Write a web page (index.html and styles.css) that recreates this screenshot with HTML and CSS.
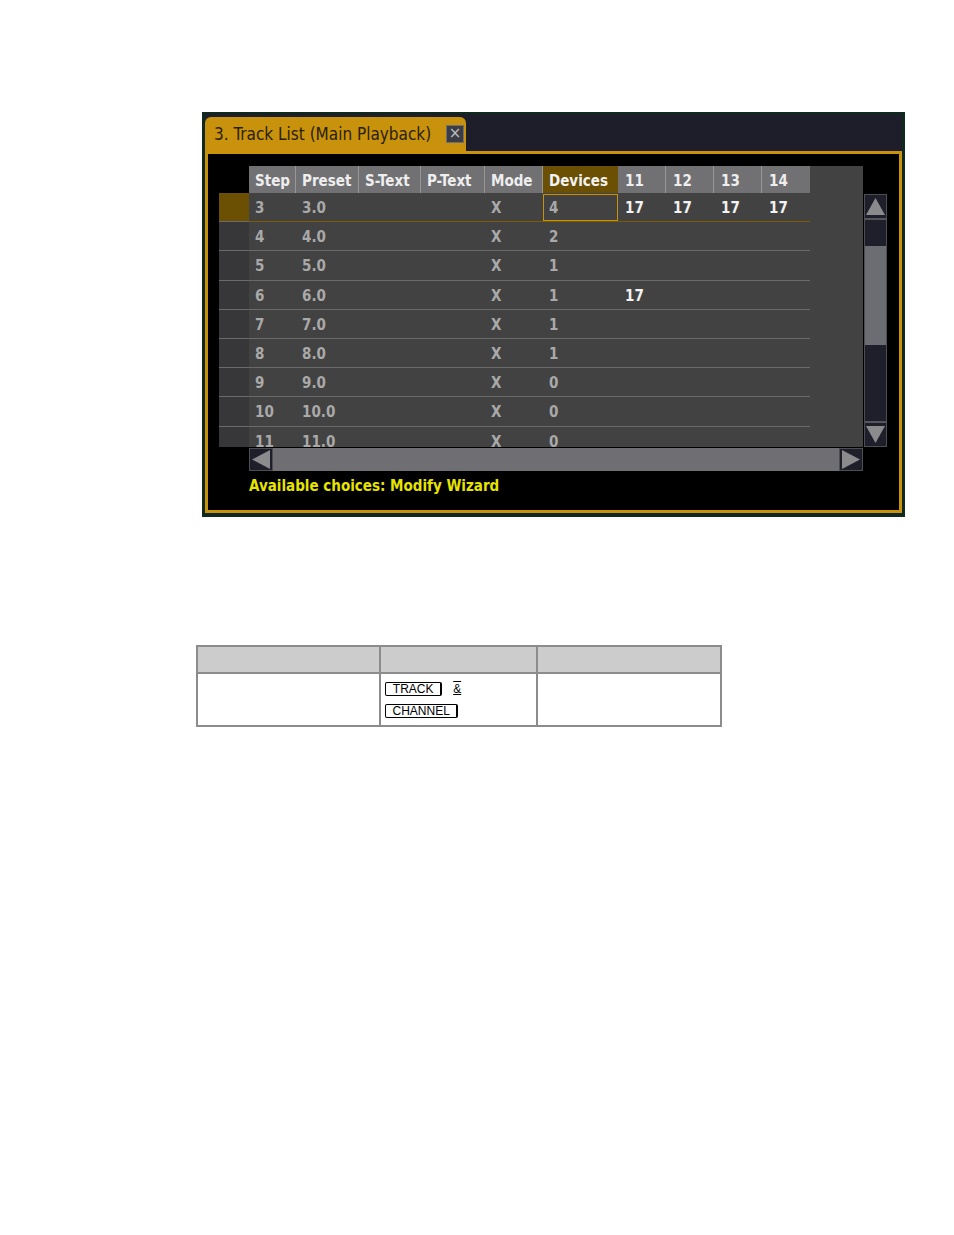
FILE: index.html
```html
<!DOCTYPE html>
<html>
<head>
<meta charset="utf-8">
<link rel="stylesheet" href="styles.css">
</head>
<body>
<div class="page">
  <div class="shot">
    <div class="tabbar">
      <div class="tab">
        <span class="tab-title">3. Track List (Main Playback)</span>
        <span class="close">×</span>
      </div>
    </div>
    <div class="frame">
      <div class="gridrow">
        <div class="grid">
          <div class="hrow">
            <div class="lh"></div>
            <div class="hc c-step">Step</div>
            <div class="hc c-preset">Preset</div>
            <div class="hc c-stext">S-Text</div>
            <div class="hc c-ptext">P-Text</div>
            <div class="hc c-mode">Mode</div>
            <div class="hc c-dev hsel">Devices</div>
            <div class="hc c-n">11</div>
            <div class="hc c-n">12</div>
            <div class="hc c-n">13</div>
            <div class="hc c-n last">14</div>
            <div class="hfill"></div>
          </div>
          <div class="row sel">
            <div class="lc"></div>
            <div class="cells">
              <div class="c c-step">3</div>
              <div class="c c-preset">3.0</div>
              <div class="c c-stext"></div>
              <div class="c c-ptext"></div>
              <div class="c c-mode">X</div>
              <div class="c c-dev csel">4</div>
              <div class="c c-n w">17</div>
              <div class="c c-n w">17</div>
              <div class="c c-n w">17</div>
              <div class="c c-n w">17</div>
            </div>
          </div>
          <div class="row">
            <div class="lc"></div>
            <div class="cells">
              <div class="c c-step">4</div><div class="c c-preset">4.0</div><div class="c c-stext"></div><div class="c c-ptext"></div><div class="c c-mode">X</div><div class="c c-dev">2</div><div class="c c-n"></div><div class="c c-n"></div><div class="c c-n"></div><div class="c c-n"></div>
            </div>
          </div>
          <div class="row">
            <div class="lc"></div>
            <div class="cells">
              <div class="c c-step">5</div><div class="c c-preset">5.0</div><div class="c c-stext"></div><div class="c c-ptext"></div><div class="c c-mode">X</div><div class="c c-dev">1</div><div class="c c-n"></div><div class="c c-n"></div><div class="c c-n"></div><div class="c c-n"></div>
            </div>
          </div>
          <div class="row">
            <div class="lc"></div>
            <div class="cells">
              <div class="c c-step">6</div><div class="c c-preset">6.0</div><div class="c c-stext"></div><div class="c c-ptext"></div><div class="c c-mode">X</div><div class="c c-dev">1</div><div class="c c-n w">17</div><div class="c c-n"></div><div class="c c-n"></div><div class="c c-n"></div>
            </div>
          </div>
          <div class="row">
            <div class="lc"></div>
            <div class="cells">
              <div class="c c-step">7</div><div class="c c-preset">7.0</div><div class="c c-stext"></div><div class="c c-ptext"></div><div class="c c-mode">X</div><div class="c c-dev">1</div><div class="c c-n"></div><div class="c c-n"></div><div class="c c-n"></div><div class="c c-n"></div>
            </div>
          </div>
          <div class="row">
            <div class="lc"></div>
            <div class="cells">
              <div class="c c-step">8</div><div class="c c-preset">8.0</div><div class="c c-stext"></div><div class="c c-ptext"></div><div class="c c-mode">X</div><div class="c c-dev">1</div><div class="c c-n"></div><div class="c c-n"></div><div class="c c-n"></div><div class="c c-n"></div>
            </div>
          </div>
          <div class="row">
            <div class="lc"></div>
            <div class="cells">
              <div class="c c-step">9</div><div class="c c-preset">9.0</div><div class="c c-stext"></div><div class="c c-ptext"></div><div class="c c-mode">X</div><div class="c c-dev">0</div><div class="c c-n"></div><div class="c c-n"></div><div class="c c-n"></div><div class="c c-n"></div>
            </div>
          </div>
          <div class="row">
            <div class="lc"></div>
            <div class="cells">
              <div class="c c-step">10</div><div class="c c-preset">10.0</div><div class="c c-stext"></div><div class="c c-ptext"></div><div class="c c-mode">X</div><div class="c c-dev">0</div><div class="c c-n"></div><div class="c c-n"></div><div class="c c-n"></div><div class="c c-n"></div>
            </div>
          </div>
          <div class="row">
            <div class="lc"></div>
            <div class="cells">
              <div class="c c-step">11</div><div class="c c-preset">11.0</div><div class="c c-stext"></div><div class="c c-ptext"></div><div class="c c-mode">X</div><div class="c c-dev">0</div><div class="c c-n"></div><div class="c c-n"></div><div class="c c-n"></div><div class="c c-n"></div>
            </div>
          </div>
        </div>
        <div class="vscroll">
          <div class="sbtn vbtn up"><svg width="21" height="21" viewBox="0 0 21 21"><polygon points="1,19 20,19 10.5,2" fill="#8b8b8e"/></svg></div>
          <div class="vtrack">
            <div class="vpre"></div>
            <div class="vthumb"></div>
            <div class="vpost"></div>
          </div>
          <div class="sbtn vbtn down"><svg width="21" height="21" viewBox="0 0 21 21"><polygon points="1,2 20,2 10.5,19" fill="#8b8b8e"/></svg></div>
        </div>
      </div>
      <div class="hscroll">
        <div class="sbtn hbtn"><svg width="22" height="21" viewBox="0 0 22 21"><polygon points="20,1 20,20 2,10.5" fill="#8b8b8e"/></svg></div>
        <div class="htrack"></div>
        <div class="sbtn hbtn"><svg width="22" height="21" viewBox="0 0 22 21"><polygon points="2,1 2,20 20,10.5" fill="#8b8b8e"/></svg></div>
      </div>
      <div class="footer">Available choices: Modify Wizard</div>
    </div>
  </div>

  <table class="doc">
    <tr class="dhead"><td class="d1"></td><td class="d2"></td><td class="d3"></td></tr>
    <tr class="dbody">
      <td></td>
      <td class="keys">
        <div class="keyline"><span class="key k-track">TRACK</span><span class="amp">&amp;</span></div>
        <div class="keyline"><span class="key k-chan">CHANNEL</span></div>
      </td>
      <td></td>
    </tr>
  </table>
</div>
</body>
</html>
```

FILE: styles.css
```css
html, body {
  margin: 0;
  padding: 0;
  background: #ffffff;
}
.page {
  padding: 112px 0 0 202px;
}
.shot {
  width: 703px;
  height: 405px;
  box-sizing: border-box;
  background: #0f2a1d;
  padding: 2px 3px 4px 3px;
  display: flex;
  flex-direction: column;
  font-family: "DejaVu Sans Condensed", "DejaVu Sans", sans-serif;
}
.tabbar {
  height: 37px;
  flex: none;
  box-sizing: border-box;
  padding-top: 3px;
  background: #1d1e29;
}
.tab {
  width: 261px;
  height: 34px;
  box-sizing: border-box;
  background: #c8920c;
  border-radius: 6px 6px 0 0;
  display: flex;
  align-items: center;
  padding-left: 9px;
  padding-right: 2px;
}
.tab-title {
  font-size: 17px;
  color: #2a2105;
}
.close {
  margin-left: auto;
  width: 18px;
  height: 18px;
  box-sizing: border-box;
  background: #3b3c46;
  border: 1px solid #6f6f72;
  color: #bdbdbd;
  font-size: 15px;
  line-height: 15px;
  text-align: center;
  font-family: "DejaVu Sans", sans-serif;
  margin-top: -1px;
}
.frame {
  flex: 1;
  border: 3px solid #c8920c;
  background: #000;
  padding: 12px 0 0 11px;
}
.gridrow {
  display: flex;
  align-items: flex-start;
}
.grid {
  width: 644px;
  height: 281px;
  overflow: hidden;
  background: #424242;
}
.hrow {
  display: flex;
  height: 27px;
}
.lh {
  width: 30px;
  background: #000;
  flex: none;
}
.hc {
  flex: none;
  box-sizing: border-box;
  height: 27px;
  background: #717174;
  border-right: 1px solid #97979a;
  color: #eeeeee;
  font-weight: bold;
  font-size: 15px;
  line-height: 31px;
  padding-left: 6px;
  white-space: nowrap;
}
.hc.last {
  border-right: none;
}
.hc.hsel {
  background: #6b4f02;
  border-right-color: #6b4f02;
  color: #f2f2f2;
}
.hfill {
  flex: 1;
  background: #424242;
}
.c-step { width: 47px; }
.c-preset { width: 63px; }
.c-stext { width: 62px; }
.c-ptext { width: 64px; }
.c-mode { width: 58px; }
.c-dev { width: 75px; }
.c-n { width: 48px; }
.hc.c-n { padding-left: 7px; }

.row {
  display: flex;
  height: 29.2px;
}
.lc {
  width: 30px;
  flex: none;
  box-sizing: border-box;
  background: #37373a;
  border-bottom: 1px solid #6a6a6a;
}
.cells {
  display: flex;
  width: 561px;
  flex: none;
  box-sizing: border-box;
  border-bottom: 1px solid #6a6a6a;
}
.row.sel .lc {
  background: #6b4f02;
}
.row.sel .cells {
  border-bottom-color: #7d5b00;
}
.c {
  flex: none;
  box-sizing: border-box;
  color: #a9a9a9;
  font-weight: bold;
  font-size: 15px;
  line-height: 31px;
  padding-left: 6px;
  white-space: nowrap;
}
.c.c-n {
  padding-left: 7px;
}
.c.w {
  color: #f2f2f2;
}
.c.csel {
  box-shadow: inset 0 0 0 1px #c8920c;
  margin-top: 1px;
  height: 27px;
  line-height: 29px;
}

.vscroll {
  width: 23px;
  height: 253px;
  margin-top: 28px;
  margin-left: 1px;
  box-sizing: border-box;
  display: flex;
  flex-direction: column;
  background: #1e1f2b;
  border: 1px solid #4d4d52;
  flex: none;
}
.sbtn {
  background: #1e1f2b;
  display: flex;
  align-items: center;
  justify-content: center;
  flex: none;
}
.vbtn {
  height: 23px;
}
.vbtn.up {
  border-bottom: 2px solid #55565c;
}
.vbtn.down {
  border-top: 2px solid #55565c;
}
.vtrack {
  flex: 1;
  display: flex;
  flex-direction: column;
}
.vpre {
  height: 26px;
}
.vthumb {
  height: 99px;
  background: #6c6d72;
}
.vpost {
  flex: 1;
}

.hscroll {
  margin-left: 30px;
  margin-top: 1px;
  width: 614px;
  height: 23px;
  display: flex;
  background: #6f6f73;
}
.hbtn {
  width: 24px;
  height: 23px;
  box-sizing: border-box;
  border: 1px solid #4d4d52;
}
.htrack {
  flex: 1;
}
.footer {
  margin-left: 30px;
  margin-top: 5px;
  color: #e6e400;
  font-weight: bold;
  font-size: 15px;
  line-height: 20px;
}

.doc {
  margin: 128px 0 0 -6px;
  border-collapse: collapse;
  width: 526px;
  font-family: "Liberation Sans", Arial, sans-serif;
}
.doc td {
  border: 2px solid #8c8c8c;
  padding: 0;
  vertical-align: top;
}
.dhead td {
  height: 25px;
  background: #cccccc;
}
.d1 { width: 182px; }
.d2 { width: 155px; }
.d3 { width: 183px; }
.dbody td {
  height: 44px;
}
.keys {
  padding: 7px 0 0 4px !important;
}
.keyline {
  display: flex;
  align-items: center;
  height: 15px;
  margin-bottom: 7px;
}
.key {
  display: inline-block;
  box-sizing: border-box;
  height: 14px;
  border: 1px solid #000;
  border-right-width: 2px;
  border-bottom-width: 1.5px;
  border-radius: 2px;
  font-size: 12px;
  line-height: 12px;
  text-align: center;
  color: #000;
}
.k-track { width: 57px; }
.k-chan { width: 73px; }
.amp {
  margin-left: 11px;
  font-size: 12px;
  line-height: 12px;
  text-decoration: underline overline;
  color: #000;
}
```
